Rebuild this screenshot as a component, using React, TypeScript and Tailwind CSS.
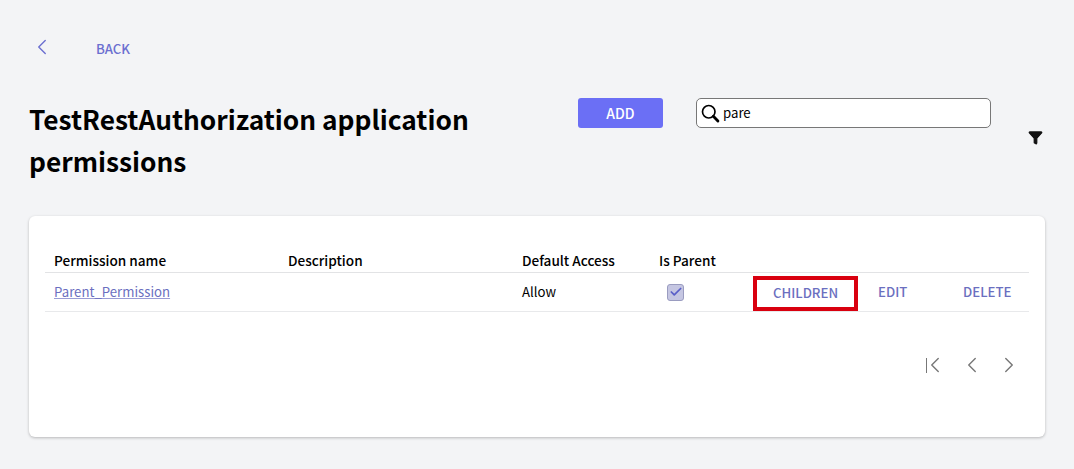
import { Check, ChevronLeft, ChevronRight, Filter } from "lucide-react";

const font = "font-['Noto_Sans_CJK_JP','Noto_Sans',sans-serif]";

const SearchIcon = () => (
  <svg viewBox="0 0 24 24" className="h-[20px] w-[20px] text-black" fill="none" stroke="currentColor">
    <circle cx="10.5" cy="10.5" r="7.5" strokeWidth="2" />
    <path d="M16 16l5.5 5.5" strokeWidth="3.4" strokeLinecap="round" />
  </svg>
);

const App = () => {
  return (
    <div className={`h-[469px] w-[1074px] overflow-hidden bg-[#f3f4f6] ${font}`}>
      <div className="flex h-[216px] flex-col pl-[29px]">
        <div className="mt-[31px] flex h-[34px] items-center">
          <ChevronLeft className="mb-[3px] h-[26px] w-[26px] text-[#6b6fd0]" strokeWidth={1.3} />
          <span className="ml-[41px] mt-[2px] text-[13.2px] font-medium text-[#6b6fd0]">BACK</span>
        </div>
        <div className="mt-[33px] flex items-start">
          <h1 className="w-[500px] text-[26.3px] font-bold leading-[42px] text-black">
            TestRestAuthorization application permissions
          </h1>
          <button className="ml-[49px] h-[30px] w-[85px] rounded-[3px] bg-[#6b6ff5] text-[14px] font-medium text-white">
            ADD
          </button>
          <div className="ml-[33px] flex h-[30px] w-[295px] items-center rounded-[5px] border border-[#777] bg-white pl-[3px]">
            <SearchIcon />
            <span className="ml-[3px] text-[13.2px] text-black">pare</span>
          </div>
          <Filter className="ml-[37px] mt-[32px] h-[15px] w-[15px] fill-[#111] text-[#111]" />
        </div>
      </div>

      <div className="ml-[29px] h-[221px] w-[1016px] rounded-[6px] bg-white px-4 pt-[33px] shadow-[0_1px_3px_rgba(0,0,0,0.25)]">
        <div className="grid h-[24px] grid-cols-[234px_234px_137px_1fr] items-center border-b border-[#e2e3e5] pl-[9px] text-[13.6px] font-medium text-black">
          <span>Permission name</span>
          <span>Description</span>
          <span>Default Access</span>
          <span>Is Parent</span>
        </div>
        <div className="grid h-[39px] grid-cols-[234px_234px_137px_94px_105px_70px_1fr] items-center border-b border-[#e8e9eb] pl-[9px] text-[13.2px]">
          <a className="text-[#6b6fc0] underline decoration-[#9a9cd6]">Parent_Permission</a>
          <span />
          <span className="text-black">Allow</span>
          <span className="ml-[8px] flex h-[17px] w-[17px] items-center justify-center rounded-[3px] border border-[#9a9cc0] bg-[#c5c6e2]">
            <Check className="h-[14px] w-[14px] text-[#5a5fc8]" strokeWidth={3} />
          </span>
          <button className="mt-[2px] flex h-[35px] items-center justify-center border-4 border-[#d9000f] font-medium text-[#6b6fc0]">
            CHILDREN
          </button>
          <button className="ml-[20px] text-left font-medium text-[#6b6fc0]">EDIT</button>
          <button className="ml-[35px] text-left font-medium text-[#6b6fc0]">DELETE</button>
        </div>
        <div className="mt-[40px] flex items-center justify-end gap-[11px] pr-[7px] text-[#777]">
          <span className="flex items-center">
            <span className="h-[15px] w-[1.5px] bg-[#777]" />
            <ChevronLeft className="-ml-[5px] h-[26px] w-[26px]" strokeWidth={1.3} />
          </span>
          <ChevronLeft className="h-[26px] w-[26px]" strokeWidth={1.3} />
          <ChevronRight className="h-[26px] w-[26px]" strokeWidth={1.3} />
        </div>
      </div>
    </div>
  );
};

export default App;
